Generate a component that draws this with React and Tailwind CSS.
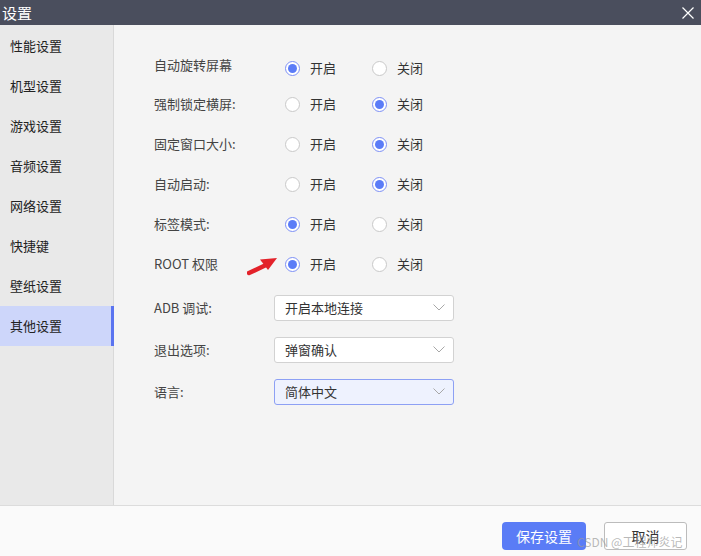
import { useState } from 'react';

const font = { fontFamily: '"Noto Sans CJK SC", "Noto Sans", sans-serif' };

const menu = ['性能设置', '机型设置', '游戏设置', '音频设置', '网络设置', '快捷键', '壁纸设置', '其他设置'];

const toggles = [
  { label: '自动旋转屏幕', on: true },
  { label: '强制锁定横屏:', on: false },
  { label: '固定窗口大小:', on: false },
  { label: '自动启动:', on: false },
  { label: '标签模式:', on: true },
  { label: 'ROOT 权限', on: true },
];

const selects = [
  { label: 'ADB 调试:', value: '开启本地连接' },
  { label: '退出选项:', value: '弹窗确认' },
  { label: '语言:', value: '简体中文', focused: true },
];

function Radio({ checked, label }) {
  return (
    <div className="flex items-center w-[87px]">
      {checked ? (
        <span className="flex items-center justify-center w-[15px] h-[15px] rounded-full border border-[#7d90f5] bg-white">
          <span className="w-[9px] h-[9px] rounded-full bg-[#5b7cf7]" />
        </span>
      ) : (
        <span className="w-[15px] h-[15px] rounded-full border border-[#c9c9c9] bg-white" />
      )}
      <span className="ml-[10px] text-[13px] text-[#333]">{label}</span>
    </div>
  );
}

function Chevron() {
  return (
    <svg width="12" height="7" viewBox="0 0 12 7" fill="none">
      <path d="M0.5 0.5 L6 6 L11.5 0.5" stroke="#a8a8a8" strokeWidth="1" />
    </svg>
  );
}

export default function App() {
  const [active] = useState(7);

  return (
    <div className="w-[701px] h-[556px] flex flex-col bg-[#f4f4f4] relative overflow-hidden" style={font}>
      {/* title bar */}
      <div className="h-[25px] bg-[#4a4e5d] flex items-center justify-between pl-[2px] pr-[7px]">
        <span className="text-white text-[15px] leading-none">设置</span>
        <svg width="12" height="12" viewBox="0 0 12 12">
          <path d="M0.5 0.5 L11.5 11.5 M11.5 0.5 L0.5 11.5" stroke="#ffffff" strokeWidth="1.2" />
        </svg>
      </div>

      {/* body */}
      <div className="flex h-[480px]">
        <div className="w-[114px] bg-[#e9e9e9] border-r border-[#d9d9d9] pt-[1px]">
          {menu.map((m, i) => (
            <div
              key={m}
              className={`h-[40px] flex items-center pl-[10px] text-[13px] text-[#222] ${
                i === active ? 'bg-[#cdd6fa] border-r-[3px] border-[#5a74f0] -mr-[1px]' : ''
              }`}
            >
              {m}
            </div>
          ))}
        </div>

        <div className="flex-1 pl-[40px] pt-[27px] relative">
          {toggles.map((t, i) => (
            <div key={t.label} className={`flex items-center ${i === 0 ? 'h-[32px]' : 'h-[40px]'}`}>
              <div className={`w-[131px] text-[13px] text-[#444] ${i === 0 ? '-mt-[6px]' : ''}`}>{t.label}</div>
              <Radio checked={t.on} label="开启" />
              <Radio checked={!t.on} label="关闭" />
            </div>
          ))}

          <div className="flex flex-col gap-[17px] mt-[11px]">
            {selects.map((s) => (
              <div key={s.label} className="flex items-center h-[25px]">
                <div className="w-[120px] text-[13px] text-[#444]">{s.label}</div>
                <div
                  className={`w-[180px] h-[26px] rounded-[3px] border flex items-center justify-between pl-[10px] pr-[8px] ${
                    s.focused ? 'bg-[#eef2fe] border-[#8da0f4]' : 'bg-white border-[#d2d2d2]'
                  }`}
                >
                  <span className="text-[13px] text-[#333]">{s.value}</span>
                  <Chevron />
                </div>
              </div>
            ))}
          </div>

          {/* red arrow annotation */}
          <svg className="absolute left-[133px] top-[231px]" width="32" height="20" viewBox="0 0 32 20">
            <path d="M2 17 L19 9" stroke="#e3222a" strokeWidth="4.5" strokeLinecap="round" />
            <path d="M30 2 L13 3.5 L21 14 Z" fill="#e3222a" />
          </svg>
        </div>
      </div>

      {/* footer */}
      <div className="flex-1 bg-[#fafafa] border-t border-[#dcdcdc] flex items-start justify-end pt-[16px] pr-[14px] gap-[18px]">
        <button className="w-[84px] h-[28px] rounded-[4px] bg-[#5a7cf6] text-white text-[14px]">保存设置</button>
        <button className="w-[83px] h-[28px] rounded-[3px] bg-white border border-[#bcbcbc] text-[#333] text-[14px]">取消</button>
      </div>

      <span className="absolute left-[577px] top-[533px] text-[12px] text-[#9a9a9a]/70 pointer-events-none">CSDN @工程师炎记</span>
    </div>
  );
}
